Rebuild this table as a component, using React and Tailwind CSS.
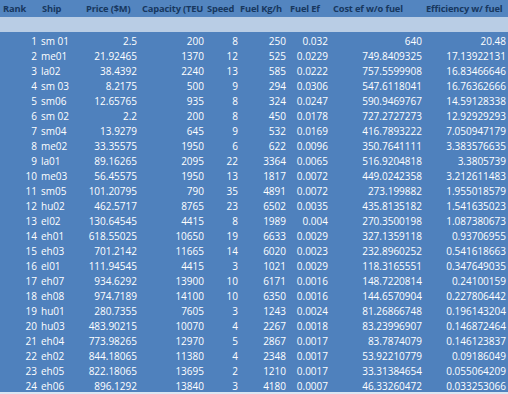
import React from 'react';

const rows = [
    [1, 'sm 01', '2.5', '200', '8', '250', '0.032', '640', '20.48'],
    [2, 'me01', '21.92465', '1370', '12', '525', '0.0229', '749.8409325', '17.13922131'],
    [3, 'la02', '38.4392', '2240', '13', '585', '0.0222', '757.5599908', '16.83466646'],
    [4, 'sm 03', '8.2175', '500', '9', '294', '0.0306', '547.6118041', '16.76362666'],
    [5, 'sm06', '12.65765', '935', '8', '324', '0.0247', '590.9469767', '14.59128338'],
    [6, 'sm 02', '2.2', '200', '8', '450', '0.0178', '727.2727273', '12.92929293'],
    [7, 'sm04', '13.9279', '645', '9', '532', '0.0169', '416.7893222', '7.050947179'],
    [8, 'me02', '33.35575', '1950', '6', '622', '0.0096', '350.7641111', '3.383576635'],
    [9, 'la01', '89.16265', '2095', '22', '3364', '0.0065', '516.9204818', '3.3805739'],
    [10, 'me03', '56.45575', '1950', '13', '1817', '0.0072', '449.0242358', '3.212611483'],
    [11, 'sm05', '101.20795', '790', '35', '4891', '0.0072', '273.199882', '1.955018579'],
    [12, 'hu02', '462.5717', '8765', '23', '6502', '0.0035', '435.8135182', '1.541635023'],
    [13, 'el02', '130.64545', '4415', '8', '1989', '0.004', '270.3500198', '1.087380673'],
    [14, 'eh01', '618.55025', '10650', '19', '6633', '0.0029', '327.1359118', '0.93706955'],
    [15, 'eh03', '701.2142', '11665', '14', '6020', '0.0023', '232.8960252', '0.541618663'],
    [16, 'el01', '111.94545', '4415', '3', '1021', '0.0029', '118.3165551', '0.347649035'],
    [17, 'eh07', '934.6292', '13900', '10', '6171', '0.0016', '148.7220814', '0.24100159'],
    [18, 'eh08', '974.7189', '14100', '10', '6350', '0.0016', '144.6570904', '0.227806442'],
    [19, 'hu01', '280.7355', '7605', '3', '1243', '0.0024', '81.26866748', '0.196143204'],
    [20, 'hu03', '483.90215', '10070', '4', '2267', '0.0018', '83.23996907', '0.146872464'],
    [21, 'eh04', '773.98265', '12970', '5', '2867', '0.0017', '83.7874079', '0.146123837'],
    [22, 'eh02', '844.18065', '11380', '4', '2348', '0.0017', '53.92210779', '0.09186049'],
    [23, 'eh05', '822.18065', '13695', '2', '1210', '0.0017', '33.31384654', '0.055064209'],
    [24, 'eh06', '896.1292', '13840', '3', '4180', '0.0007', '46.33260472', '0.033253066'],
];

// header text as it shows in the sheet (capacity is cut by the next cell)
const headers = ['Rank', 'Ship', 'Price ($M)', 'Capacity (TEU', 'Speed', 'Fuel Kg/h', 'Fuel Ef', 'Cost ef w/o fuel', 'Efficiency w/ fuel'];
const headPad = ['pl-[3px]', 'pl-[3px]', 'pl-[2px]', 'pl-[3px]', 'pl-[1px]', 'pl-0', 'pl-[2px]', 'pl-[3px]', 'pl-[2px]'];
const widths = ['w-[39px]', 'w-[45px]', 'w-[55px]', 'w-[67px]', 'w-[34px]', 'w-[48px]', 'w-[42px]', 'w-[94px]', 'w-[84px]'];

const App = () => {
    return (
        <div className="w-[508px] h-[394px] overflow-hidden bg-[#4f81bd] text-[10px]" style={{ fontFamily: '"Open Sans", sans-serif' }}>
            {/* Header row */}
            <div className="flex h-[17px] bg-[#5385c0]">
                {headers.map((h, i) => (
                    <div key={i} className={`${widths[i]} ${headPad[i]} shrink-0 whitespace-nowrap pt-[3px] leading-[12px] text-[9.3px] tracking-[-0.15px] font-bold text-[#17375e]`}>
                        {h}
                    </div>
                ))}
            </div>
            {/* Empty light row */}
            <div className="h-[15px] bg-[#b9cde5]"></div>

            {/* Data rows */}
            <div>
                {rows.map((row, r) => (
                    <div key={r} className="flex h-[15px] text-white">
                        {row.map((cell, i) => (
                            <div
                                key={i}
                                className={`${widths[i]} shrink-0 overflow-hidden whitespace-nowrap pt-[3px] leading-[12px] ${i === 1 ? 'text-left pl-[2px]' : 'text-right pr-[2px]'}`}
                            >
                                {cell}
                            </div>
                        ))}
                    </div>
                ))}
            </div>
            <div className="h-[2px] bg-[#dce6f2]"></div>
        </div>
    );
};

export default App;
